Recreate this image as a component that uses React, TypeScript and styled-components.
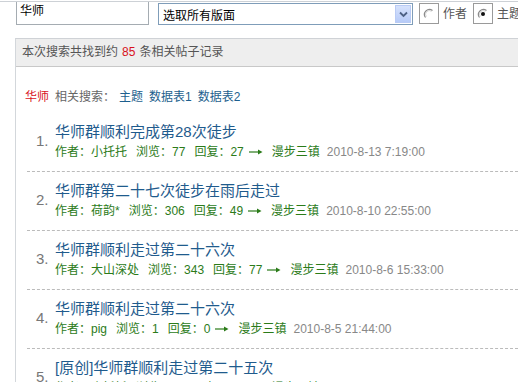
import React from 'react';
import styled, { createGlobalStyle } from 'styled-components';

type Post = {
  title: string;
  author: string;
  views: number;
  replies: number;
  board: string;
  date: string;
};

const posts: Post[] = [
  { title: '华师群顺利完成第28次徒步', author: '小托托', views: 77, replies: 27, board: '漫步三镇', date: '2010-8-13 7:19:00' },
  { title: '华师群第二十七次徒步在雨后走过', author: '荷韵*', views: 306, replies: 49, board: '漫步三镇', date: '2010-8-10 22:55:00' },
  { title: '华师群顺利走过第二十六次', author: '大山深处', views: 343, replies: 77, board: '漫步三镇', date: '2010-8-6 15:33:00' },
  { title: '华师群顺利走过第二十六次', author: 'pig', views: 1, replies: 0, board: '漫步三镇', date: '2010-8-5 21:44:00' },
  { title: '[原创]华师群顺利走过第二十五次', author: '小托托', views: 95, replies: 31, board: '漫步三镇', date: '2010-7-30 8:02:00' },
];

const GlobalStyle = createGlobalStyle`
  html, body {
    margin: 0;
    padding: 0;
    background: #fff;
    overflow: hidden;
  }
  body {
    font-family: "Liberation Sans", "Noto Sans CJK SC", sans-serif;
    font-size: 12px;
    color: #555;
  }
`;

const Page = styled.div`
  width: 518px;
  height: 382px;
  overflow: hidden;
`;

const Toolbar = styled.div`
  display: flex;
  align-items: flex-start;
  margin-top: 1px;
  border-top: 1px solid #cdd1d6;
  height: 24px;
  padding-left: 16px;
  overflow: hidden;
  white-space: nowrap;

  & > * {
    flex-shrink: 0;
  }
`;

const KeywordInput = styled.div`
  box-sizing: border-box;
  width: 133px;
  height: 23px;
  border: 1px solid #a5acb2;
  border-top: none;
  padding: 1px 0 0 3px;
  font-size: 12px;
  line-height: 16px;
  color: #000;
`;

const BoardSelect = styled.div`
  box-sizing: border-box;
  display: flex;
  align-items: center;
  justify-content: space-between;
  margin-left: 9px;
  margin-top: 1px;
  width: 255px;
  height: 22px;
  border: 1px solid #7f9db9;
  padding: 0 1px 0 4px;
  font-size: 12px;
  color: #000;
  background: #fff;
`;

const DropButton = styled.div`
  box-sizing: border-box;
  width: 16px;
  height: 18px;
  display: flex;
  align-items: center;
  justify-content: center;
  border: 1px solid #b9cbf5;
  background: linear-gradient(#d6e2fc, #b7cbf8);
`;

const RadioLabel = styled.label`
  display: flex;
  align-items: center;
  margin-left: 6px;
  margin-top: 1px;
  gap: 4px;
  font-size: 12px;
  line-height: 20px;
  color: #555;
  white-space: nowrap;
`;

const RadioBox = styled.span`
  box-sizing: border-box;
  width: 20px;
  height: 21px;
  border: 1px solid #9a9a9a;
  display: flex;
  align-items: center;
  justify-content: center;
  background: #fff;
`;

const Panel = styled.div`
  margin: 12px 0 0 15px;
  border-top: 1px solid #cfd2d6;
  border-left: 1px solid #d3d7db;
  height: 400px;
`;

const PanelHeader = styled.div`
  height: 27px;
  line-height: 27px;
  background: #eeeeee;
  border-bottom: 1px solid #c8c8c8;
  padding-left: 6px;
  color: #555;
`;

const Red = styled.span<{ $gap?: number }>`
  color: #d8111c;
  margin: 0 ${(p) => p.$gap ?? 0}px;
`;

const Related = styled.div`
  display: flex;
  align-items: center;
  padding: 20px 0 0 9px;
  line-height: 20px;
`;

const RelatedLabel = styled.span`
  color: #666;
  margin: 0 4px 0 6px;
`;

const RelatedLink = styled.a`
  color: #1d5f8e;
  text-decoration: none;
  margin-right: 6px;
`;

const List = styled.ul`
  list-style: none;
  margin: 6px 0 0 11px;
  padding: 0;
`;

const Item = styled.li`
  display: grid;
  grid-template-columns: 12px 1fr;
  column-gap: 7px;
  padding: 8px 0 9px 9px;
  border-bottom: 1px dashed #bbbbbb;
`;

const Num = styled.span`
  grid-row: 1 / span 2;
  align-self: center;
  margin-top: -3px;
  font-size: 15px;
  color: #777;
`;

const Title = styled.a`
  font-size: 15px;
  line-height: 21px;
  color: #1f5b8d;
  text-decoration: none;
  white-space: nowrap;
`;

const Meta = styled.div`
  display: flex;
  align-items: center;
  line-height: 20px;
  font-size: 12px;
  color: #2b7b19;
  white-space: nowrap;
`;

const MetaPart = styled.span<{ $gap: number }>`
  display: inline-flex;
  align-items: center;
  margin-right: ${(p) => p.$gap}px;
`;

const DateText = styled.span`
  color: #888;
`;

function Radio({ checked }: { checked?: boolean }) {
  return (
    <RadioBox>
      <svg width="14" height="14" viewBox="0 0 14 14">
        <path d="M10.5 3.5 A5 5 0 0 0 3.5 10.5" fill="none" stroke="#8a8a8a" strokeWidth="1.2" />
        <path d="M9.6 4.4 A3.7 3.7 0 0 0 4.4 9.6" fill="none" stroke="#d6d6d6" strokeWidth="1" />
        {checked && <circle cx="7" cy="7" r="2" fill="#111" />}
      </svg>
    </RadioBox>
  );
}

function Arrow() {
  return (
    <svg width="14" height="8" viewBox="0 0 14 8">
      <path d="M0 4 H10" stroke="#2b7b19" strokeWidth="1.2" />
      <path d="M9 1.5 L13.5 4 L9 6.5 Z" fill="#2b7b19" />
    </svg>
  );
}

export default function App() {
  return (
    <Page>
      <GlobalStyle />
      <Toolbar>
        <KeywordInput>华师</KeywordInput>
        <BoardSelect>
          选取所有版面
          <DropButton>
            <svg width="9" height="7" viewBox="0 0 9 7">
              <path d="M1 1.5 L4.5 5 L8 1.5" fill="none" stroke="#4d6185" strokeWidth="1.8" />
            </svg>
          </DropButton>
        </BoardSelect>
        <RadioLabel>
          <Radio />
          作者
        </RadioLabel>
        <RadioLabel>
          <Radio checked />
          主题
        </RadioLabel>
      </Toolbar>

      <Panel>
        <PanelHeader>
          本次搜索共找到约<Red $gap={4}>85</Red>条相关帖子记录
        </PanelHeader>
        <Related>
          <Red>华师</Red>
          <RelatedLabel>相关搜索：</RelatedLabel>
          <RelatedLink href="#">主题</RelatedLink>
          <RelatedLink href="#">数据表1</RelatedLink>
          <RelatedLink href="#">数据表2</RelatedLink>
        </Related>
        <List>
          {posts.map((post, index) => (
            <Item key={index}>
              <Num>{index + 1}.</Num>
              <Title href="#">{post.title}</Title>
              <Meta>
                <MetaPart $gap={9}>作者：{post.author}</MetaPart>
                <MetaPart $gap={9}>浏览：{post.views}</MetaPart>
                <MetaPart $gap={5}>回复：{post.replies}</MetaPart>
                <MetaPart $gap={9}>
                  <Arrow />
                </MetaPart>
                <MetaPart $gap={7}>{post.board}</MetaPart>
                <DateText>{post.date}</DateText>
              </Meta>
            </Item>
          ))}
        </List>
      </Panel>
    </Page>
  );
}
